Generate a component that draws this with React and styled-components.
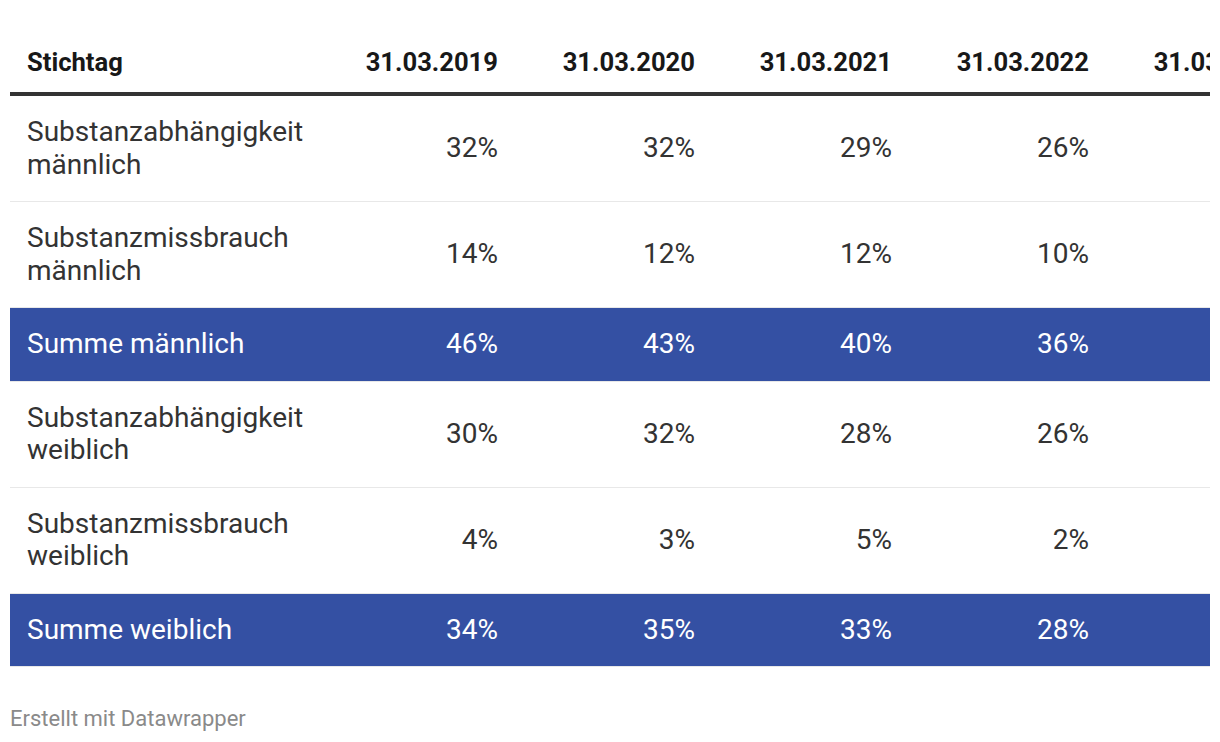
import React from "react";
import styled, { createGlobalStyle } from "styled-components";

const GlobalStyle = createGlobalStyle`
  html, body {
    margin: 0;
    padding: 0;
    background: #fff;
  }
  body {
    font-family: Roboto, "Liberation Sans", Arial, sans-serif;
    color: #333;
  }
`;

const dates = ["31.03.2019", "31.03.2020", "31.03.2021", "31.03.2022", "31.03.2023"];

const rows = [
  { label: "Substanzabhängigkeit männlich", values: ["32%", "32%", "29%", "26%", ""] },
  { label: "Substanzmissbrauch männlich", values: ["14%", "12%", "12%", "10%", ""] },
  { label: "Summe männlich", values: ["46%", "43%", "40%", "36%", ""], highlight: true },
  { label: "Substanzabhängigkeit weiblich", values: ["30%", "32%", "28%", "26%", ""] },
  { label: "Substanzmissbrauch weiblich", values: ["4%", "3%", "5%", "2%", ""] },
  { label: "Summe weiblich", values: ["34%", "35%", "33%", "28%", ""], highlight: true },
];

export default function App() {
  return (
    <>
      <GlobalStyle />
      <Wrapper>
        <Scroller>
          <Table>
            <colgroup>
              <col style={{ width: 308 }} />
              {dates.map((d) => (
                <col key={d} style={{ width: 197 }} />
              ))}
            </colgroup>
            <thead>
              <tr>
                <HeadCell>Stichtag</HeadCell>
                {dates.map((d) => (
                  <HeadCell key={d} $num>
                    {d}
                  </HeadCell>
                ))}
              </tr>
            </thead>
            <tbody>
              {rows.map((row) => (
                <Row key={row.label} $highlight={row.highlight}>
                  <LabelCell>{row.label}</LabelCell>
                  {row.values.map((v, i) => (
                    <NumCell key={i}>{v}</NumCell>
                  ))}
                </Row>
              ))}
            </tbody>
          </Table>
        </Scroller>
        <Footer>Erstellt mit Datawrapper</Footer>
      </Wrapper>
    </>
  );
}

const Wrapper = styled.div`
  padding: 26px 0 0 10px;
  width: 1200px;
`;

const Scroller = styled.div`
  width: 1200px;
  overflow: hidden;
`;

const Table = styled.table`
  table-layout: fixed;
  border-collapse: collapse;
  width: 1293px;
  font-size: 28px;
  line-height: 32.5px;
`;

const HeadCell = styled.th`
  padding: 20px 17px 14px;
  font-size: 25.6px;
  line-height: 32px;
  font-weight: 700;
  color: #181818;
  text-align: ${(p) => (p.$num ? "right" : "left")};
  white-space: nowrap;
  border-bottom: 4px solid #333;
`;

const Row = styled.tr`
  background: ${(p) => (p.$highlight ? "#3450a3" : "#fff")};
  color: ${(p) => (p.$highlight ? "#fff" : "#333")};
  border-bottom: 1px solid #e8e8e8;
`;

const LabelCell = styled.td`
  padding: 20px 17px;
  text-align: left;
  vertical-align: middle;
`;

const NumCell = styled.td`
  padding: 20px 17px;
  text-align: right;
  vertical-align: middle;
  white-space: nowrap;
`;

const Footer = styled.div`
  margin-top: 39px;
  font-size: 22px;
  line-height: 26px;
  color: #8a8a8a;
`;
